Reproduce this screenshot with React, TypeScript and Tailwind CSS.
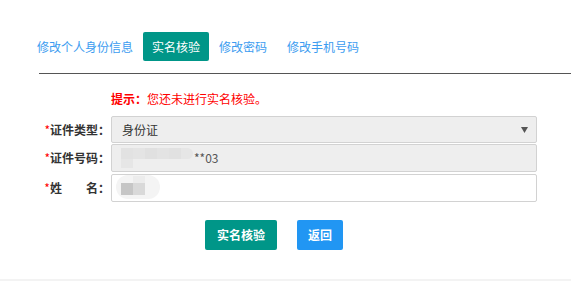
import React, { useState } from "react";

const tabs = ["修改个人身份信息", "实名核验", "修改密码", "修改手机号码"];

const Label = ({ children }: { children: React.ReactNode }) => (
  <div className="w-[111px] shrink-0 text-right pr-[1px] text-[12px] font-bold text-[#333] whitespace-nowrap">
    {children}
  </div>
);

const Star = () => <span className="text-[#ff0000] font-normal">*</span>;

const App = () => {
  const [active, setActive] = useState(1);

  return (
    <div
      className="w-full h-[281px] bg-white flex flex-col"
      style={{ fontFamily: '"Noto Sans CJK SC", "Noto Sans", sans-serif' }}
    >
      <div className="flex pl-[27px] pt-[32px]">
        {tabs.map((t, i) => (
          <button
            key={t}
            onClick={() => setActive(i)}
            className={`h-[29px] text-[12px] leading-[29px] rounded-[2px] ${
              i === 1 ? "px-[9px]" : "px-[10px]"
            } ${active === i ? "bg-[#009688] text-white" : "text-[#3c9cf0]"}`}
          >
            {t}
          </button>
        ))}
      </div>

      <div className="ml-[39px] mt-[12px] h-px bg-[#555]" />

      <div className="pl-[111px] mt-[17px] text-[12px] leading-[16px] text-[#ff0000]">
        <span className="font-bold">提示：</span>您还未进行实名核验。
      </div>

      <div className="flex flex-col mt-[9px]">
        <div className="flex items-center">
          <Label>
            <Star />
            证件类型：
          </Label>
          <div className="relative w-[426px] h-[27px] border border-[#d2d2d2] bg-[#eeeeee] rounded-[2px] flex items-center pl-[10px] text-[12px] text-[#333]">
            身份证
            <svg
              className="absolute right-[8px] top-[10px]"
              width="7"
              height="6"
              viewBox="0 0 7 6"
            >
              <polygon points="0,0 7,0 3.5,6" fill="#555" />
            </svg>
          </div>
        </div>

        <div className="flex items-center mt-[1px]">
          <Label>
            <Star />
            证件号码：
          </Label>
          <div className="relative w-[426px] h-[28px] border border-[#d2d2d2] bg-[#eeeeee] rounded-[2px] flex items-center pl-[82px] text-[12px] text-[#555]">
            <div className="absolute left-[9px] top-[3px] flex flex-col">
              <div className="flex">
                <div className="w-[12px] h-[11px] bg-[#e2e2e2]" />
                <div className="w-[12px] h-[11px] bg-[#e4e4e4]" />
                <div className="w-[12px] h-[11px] bg-[#e0e0e0]" />
                <div className="w-[12px] h-[11px] bg-[#e3e3e3]" />
                <div className="w-[12px] h-[11px] bg-[#e1e1e1]" />
                <div className="w-[12px] h-[11px] bg-[#e6e6e6] rounded-r-full" />
              </div>
              <div className="w-[12px] h-[9px] bg-[#e6e6e6]" />
            </div>
            **03
          </div>
        </div>

        <div className="flex items-center mt-[2px]">
          <Label>
            <Star />
            姓<span className="inline-block w-[24px]" />名：
          </Label>
          <div className="relative w-[426px] h-[28px] border border-[#d2d2d2] bg-white rounded-[2px]">
            <div className="absolute left-[4px] top-[0px] w-[44px] h-[24px] rounded-full bg-[#f4f4f4]" />
            <div className="absolute left-[9px] top-[8px] flex">
              <div className="w-[12px] h-[12px] bg-[#c6c6c6]" />
              <div className="w-[12px] h-[12px] bg-[#d9d9d9]" />
            </div>
            <div className="absolute left-[21px] top-[1px] w-[12px] h-[7px] bg-[#ececec]" />
          </div>
        </div>
      </div>

      <div className="flex mt-[18px] pl-[205px] gap-[20px]">
        <button className="h-[30px] px-[12px] bg-[#009688] text-white text-[12px] font-bold rounded-[2px]">
          实名核验
        </button>
        <button className="h-[30px] px-[11px] bg-[#2196f3] text-white text-[12px] font-bold rounded-[2px]">
          返回
        </button>
      </div>

      <div className="mt-auto h-[2px] bg-[#f3f3f3]" />
    </div>
  );
};

export default App;
